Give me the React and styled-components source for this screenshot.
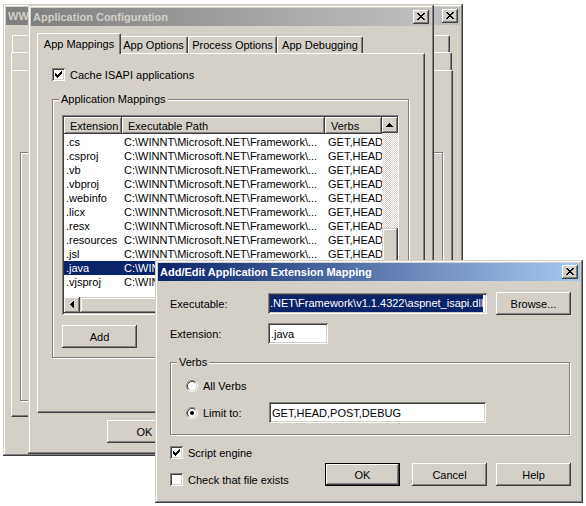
import React from "react";
import styled, { createGlobalStyle, css } from "styled-components";

const FACE = "#d4d0c8";
const SHADOW = "#808080";
const DARK = "#404040";
const NAVY = "#0a246a";

const GlobalStyle = createGlobalStyle`
  html, body { margin: 0; padding: 0; background: #fff; }
  body {
    font-family: "Liberation Sans", Arial, sans-serif;
    font-size: 11px;
    color: #000;
  }
  * { box-sizing: border-box; }
`;

const raised = css`
  box-shadow: inset -1px -1px ${DARK}, inset 1px 1px #fff, inset -2px -2px ${SHADOW}, inset 2px 2px ${FACE};
`;
const sunken = css`
  box-shadow: inset 1px 1px ${SHADOW}, inset -1px -1px #fff, inset 2px 2px ${DARK}, inset -2px -2px ${FACE};
`;
const dither = css`
  background: repeating-conic-gradient(#fff 0 25%, ${FACE} 0 50%) 0 0 / 2px 2px;
`;

const Desktop = styled.div`
  position: relative;
  width: 586px;
  height: 506px;
  overflow: hidden;
  background: #fff;
`;

/* windows sit on a free desktop, so they are placed by coordinates */
const Window = styled.section`
  position: absolute;
  isolation: isolate;
  left: ${(p) => p.$x}px;
  top: ${(p) => p.$y}px;
  width: ${(p) => p.$w}px;
  height: ${(p) => p.$h}px;
  padding: 3px;
  background: ${FACE};
  box-shadow: inset -1px -1px ${DARK}, inset 1px 1px ${FACE}, inset -2px -2px ${SHADOW}, inset 2px 2px #fff;
  display: flex;
  flex-direction: column;
`;

const TitleBar = styled.header`
  flex: none;
  height: 18px;
  margin-bottom: 1px;
  display: flex;
  align-items: center;
  gap: 4px;
  padding: 0 2px;
  background: linear-gradient(to right, ${(p) => (p.$active ? "#0a246a, #a6caf0" : "#808080, #c0c0c0")});
  color: ${(p) => (p.$active ? "#fff" : FACE)};
  font-weight: bold;
`;

const Title = styled.span`
  flex: 1;
  min-width: 0;
  white-space: nowrap;
  overflow: hidden;
`;

const CloseBox = styled.span`
  flex: none;
  width: 16px;
  height: 14px;
  background: ${FACE};
  ${raised}
`;

const Client = styled.div`
  flex: 1;
  display: flex;
  flex-direction: column;
  padding: ${(p) => p.$pad};
`;

const TabStrip = styled.div`
  flex: none;
  display: flex;
  align-items: flex-end;
  height: ${(p) => p.$h || 20}px;
  margin: ${(p) => p.$m || "0"};
  padding-left: ${(p) => p.$pl ?? 2}px;
`;

const Tab = styled.div`
  position: relative;
  z-index: ${(p) => (p.$active ? 2 : 1)};
  flex: ${(p) => (p.$w ? "none" : 1)};
  width: ${(p) => (p.$w ? `${p.$w}px` : "auto")};
  height: ${(p) => (p.$active ? 21 : p.$h || 17)}px;
  margin: ${(p) => (p.$active ? "0 -2px -1px -2px" : "0")};
  padding-bottom: ${(p) => (p.$active ? 1 : 0)}px;
  display: flex;
  align-items: center;
  justify-content: center;
  background: ${FACE};
  border-top: 1px solid #fff;
  border-left: 1px solid #fff;
  border-right: 1px solid ${DARK};
  border-radius: 2px 2px 0 0;
  box-shadow: inset -1px 0 ${SHADOW};
  white-space: nowrap;
  overflow: hidden;
`;

const TabPanel = styled.div`
  flex: none;
  height: ${(p) => p.$h}px;
  padding: ${(p) => p.$pad || "14px"};
  background: ${FACE};
  border: 1px solid;
  border-color: #fff ${DARK} ${DARK} #fff;
  box-shadow: inset -1px -1px ${SHADOW};
  display: flex;
  flex-direction: column;
`;

const Etched = styled.div`
  margin: ${(p) => p.$m};
  height: ${(p) => p.$h}px;
  border: 1px solid ${SHADOW};
  box-shadow: inset 1px 1px #fff, 1px 1px #fff;
`;

const GroupBox = styled.fieldset`
  margin: ${(p) => p.$mt || 0}px 1px 0 0;
  padding: 0;
  min-width: 0;
  border: 1px solid ${SHADOW};
  box-shadow: inset 1px 1px #fff, 1px 1px #fff;
`;

const Legend = styled.legend`
  margin-left: 6px;
  padding: 0 2px;
  line-height: 14px;
  background: ${FACE};
`;

const GroupInner = styled.div`
  padding: ${(p) => p.$pad};
  display: flex;
  flex-direction: column;
`;

const CheckRow = styled.div`
  display: flex;
  align-items: center;
  gap: 5px;
  height: 13px;
  white-space: nowrap;
`;

const CheckBox = styled.span`
  flex: none;
  width: 13px;
  height: 13px;
  background: #fff;
  ${sunken}
  svg { display: block; }
`;

const RadioRow = styled.div`
  display: flex;
  align-items: center;
  height: ${(p) => p.$h || 16}px;
  margin-top: ${(p) => p.$mt || 0}px;
  white-space: nowrap;
`;

const RadioGlyph = styled.svg`
  flex: none;
  display: block;
  margin-right: 5px;
`;

const RadioLabel = styled.span`
  width: ${(p) => (p.$w ? `${p.$w}px` : "auto")};
  flex: none;
`;

const Button = styled.button`
  flex: none;
  width: 75px;
  height: 23px;
  margin: 0 0 0 ${(p) => p.$ml || 0}px;
  padding: 0;
  border: ${(p) => (p.$default ? "1px solid #000" : "none")};
  background: ${FACE};
  font: 11px "Liberation Sans", Arial, sans-serif;
  color: ${(p) => (p.$disabled ? SHADOW : "#000")};
  text-shadow: ${(p) => (p.$disabled ? "1px 1px #fff" : "none")};
  ${raised}
`;

const ButtonRow = styled.div`
  flex: none;
  display: flex;
  justify-content: flex-end;
  gap: 6px;
  margin-top: 7px;
`;

const ListView = styled.div`
  flex: none;
  height: 200px;
  padding: 2px;
  background: #fff;
  ${sunken}
  display: grid;
  grid-template-columns: 318px 16px;
  grid-template-rows: 180px 16px;
`;

const ListMain = styled.div`
  overflow: hidden;
`;

const HeaderRow = styled.div`
  display: flex;
  height: 17px;
`;

const HeaderCell = styled.div`
  flex: none;
  width: ${(p) => p.$w}px;
  padding-left: 6px;
  display: flex;
  align-items: center;
  background: ${FACE};
  ${raised}
  white-space: nowrap;
  overflow: hidden;
`;

const Rows = styled.div`
  padding-top: 1px;
`;

const Row = styled.div`
  display: flex;
  align-items: center;
  height: 14px;
  background: ${(p) => (p.$selected ? NAVY : "transparent")};
  color: ${(p) => (p.$selected ? "#fff" : "#000")};
`;

const Cell = styled.div`
  flex: none;
  width: ${(p) => p.$w}px;
  padding-left: ${(p) => p.$pl}px;
  white-space: nowrap;
  overflow: hidden;
`;

const VScroll = styled.div`
  display: flex;
  flex-direction: column;
  ${dither}
`;

const HScroll = styled.div`
  display: flex;
  ${dither}
`;

const ScrollBtn = styled.div`
  flex: none;
  width: 16px;
  height: 16px;
  margin: ${(p) => (p.$end ? "auto 0 0 0" : "0")};
  background: ${FACE};
  ${raised}
  svg { display: block; }
`;

const HEnd = styled(ScrollBtn)`
  margin: 0 0 0 auto;
`;

const Thumb = styled.div`
  flex: none;
  width: ${(p) => (p.$w ? `${p.$w}px` : "16px")};
  height: ${(p) => (p.$h ? `${p.$h}px` : "16px")};
  margin: ${(p) => p.$m || 0};
  background: ${FACE};
  box-shadow: inset -1px -1px ${DARK}, inset 1px 1px ${FACE}, inset -2px -2px ${SHADOW}, inset 2px 2px #fff;
`;

const Corner = styled.div`
  background: ${FACE};
`;

const ActionLine = styled.div`
  display: flex;
  margin-top: 10px;
`;

const DialogBody = styled.div`
  display: flex;
  flex-direction: column;
  padding: 10px 9px 0 12px;
`;

const FieldRow = styled.div`
  display: flex;
  align-items: center;
  height: 23px;
  margin-top: ${(p) => p.$mt || 0}px;
`;

const FieldLabel = styled.span`
  flex: none;
  width: ${(p) => p.$w}px;
`;

const TextField = styled.div`
  flex: none;
  width: ${(p) => p.$w}px;
  height: 21px;
  padding: 2px ${(p) => p.$px ?? 3}px;
  background: #fff;
  ${sunken}
  display: flex;
  align-items: center;
  overflow: hidden;
  white-space: nowrap;
`;

const Highlight = styled.span`
  background: ${NAVY};
  color: #fff;
  line-height: 17px;
`;

const DialogFoot = styled.div`
  display: flex;
  align-items: flex-end;
  justify-content: space-between;
  margin-top: 11px;
`;

const CheckStack = styled.div`
  display: flex;
  flex-direction: column;
  gap: 14px;
`;

const ButtonGroup = styled.div`
  display: flex;
`;

/* small pixel glyphs, as rects: [x, y, w, h] */
const Pixels = ({ w, h, rects }) => (
  <svg width={w} height={h} viewBox={`0 0 ${w} ${h}`} shapeRendering="crispEdges">
    {rects.map(([x, y, rw, rh = 1], i) => (
      <rect key={i} x={x} y={y} width={rw} height={rh} fill="#000" />
    ))}
  </svg>
);

const CLOSE_X = [
  [4, 3, 2], [10, 3, 2], [5, 4, 2], [9, 4, 2], [6, 5, 4], [7, 6, 2],
  [6, 7, 4], [5, 8, 2], [9, 8, 2], [4, 9, 2], [10, 9, 2],
];
const CHECK = [
  [9, 3, 1], [8, 4, 2], [3, 5, 1], [7, 5, 3], [3, 6, 2], [6, 6, 3],
  [3, 7, 5], [4, 8, 3], [5, 9, 1],
];
const UP = [[7, 6, 1], [6, 7, 3], [5, 8, 5], [4, 9, 7]];
const DOWN = [[4, 6, 7], [5, 7, 5], [6, 8, 3], [7, 9, 1]];
const LEFT = [[6, 7, 1, 1], [7, 6, 1, 3], [8, 5, 1, 5], [9, 4, 1, 7]];
const RIGHT = [[6, 4, 1, 7], [7, 5, 1, 5], [8, 6, 1, 3], [9, 7, 1, 1]];

const Close = () => (
  <CloseBox>
    <Pixels w={16} h={14} rects={CLOSE_X} />
  </CloseBox>
);

const Check = ({ checked }) => (
  <CheckBox>{checked && <Pixels w={13} h={13} rects={CHECK} />}</CheckBox>
);

const Radio = ({ checked }) => (
  <RadioGlyph width="12" height="12" viewBox="0 0 12 12">
    <circle cx="6" cy="6" r="5" fill="#fff" />
    <path d="M2.11 9.89A5.5 5.5 0 0 1 9.89 2.11" fill="none" stroke={SHADOW} />
    <path d="M9.89 2.11A5.5 5.5 0 0 1 2.11 9.89" fill="none" stroke="#fff" />
    <path d="M2.82 9.18A4.5 4.5 0 0 1 9.18 2.82" fill="none" stroke={DARK} />
    <path d="M9.18 2.82A4.5 4.5 0 0 1 2.82 9.18" fill="none" stroke={FACE} />
    {checked && <circle cx="6" cy="6" r="2" fill="#000" />}
  </RadioGlyph>
);

const PATH = "C:\\WINNT\\Microsoft.NET\\Framework\\...";
const VERBS = "GET,HEAD,POST,DEBUG";
const EXTENSIONS = [
  ".cs", ".csproj", ".vb", ".vbproj", ".webinfo", ".licx",
  ".resx", ".resources", ".jsl", ".java", ".vjsproj",
];

function BackWindow() {
  return (
    <Window $x={3} $y={4} $w={460} $h={452}>
      <TitleBar>
        <Title>WWW Service Master Properties for KS</Title>
        <Close />
      </TitleBar>
      <Client $pad="9px 7px 0 5px">
        <TabStrip $h={17} $m="0 3px 0 1px" $pl={0}>
          <Tab>Web Site</Tab>
          <Tab>Performance</Tab>
          <Tab>ISAPI Filters</Tab>
          <Tab>Home Directory</Tab>
        </TabStrip>
        <TabStrip $h={18} $m="0 1px 0 0" $pl={0}>
          <Tab $h={18}>'Documents</Tab>
          <Tab $h={18}>Directory Security</Tab>
          <Tab $h={18}>HTTP Headers</Tab>
          <Tab $h={18}>Custom Errors</Tab>
        </TabStrip>
        <TabPanel $h={347} $pad="0 8px">
          <Etched $m="81px 1px 0 0" $h={249} />
        </TabPanel>
      </Client>
    </Window>
  );
}

function AppConfigWindow() {
  return (
    <Window $x={28} $y={5} $w={406} $h={449}>
      <TitleBar>
        <Title>Application Configuration</Title>
        <Close />
      </TitleBar>
      <Client $pad="6px 6px 0 6px">
        <TabStrip>
          <Tab $active $w={84}>App Mappings</Tab>
          <Tab $w={69}>App Options</Tab>
          <Tab $w={89}>Process Options</Tab>
          <Tab $w={86}>App Debugging</Tab>
        </TabStrip>
        <TabPanel $h={360}>
          <CheckRow>
            <Check checked />
            <span>Cache ISAPI applications</span>
          </CheckRow>
          <GroupBox $mt={11}>
            <Legend>Application Mappings</Legend>
            <GroupInner $pad="9px 9px 9px">
              <ListView>
                <ListMain>
                  <HeaderRow>
                    <HeaderCell $w={58}>Extension</HeaderCell>
                    <HeaderCell $w={203}>Executable Path</HeaderCell>
                    <HeaderCell $w={57}>Verbs</HeaderCell>
                  </HeaderRow>
                  <Rows>
                    {EXTENSIONS.map((ext) => (
                      <Row key={ext} $selected={ext === ".java"}>
                        <Cell $w={58} $pl={2}>{ext}</Cell>
                        <Cell $w={203} $pl={2}>{PATH}</Cell>
                        <Cell $w={57} $pl={3}>{VERBS}</Cell>
                      </Row>
                    ))}
                  </Rows>
                </ListMain>
                <VScroll>
                  <ScrollBtn>
                    <Pixels w={16} h={16} rects={UP} />
                  </ScrollBtn>
                  <Thumb $h={40} $m="95px 0 0 0" />
                  <ScrollBtn $end>
                    <Pixels w={16} h={16} rects={DOWN} />
                  </ScrollBtn>
                </VScroll>
                <HScroll>
                  <ScrollBtn>
                    <Pixels w={16} h={16} rects={LEFT} />
                  </ScrollBtn>
                  <Thumb $w={230} />
                  <HEnd>
                    <Pixels w={16} h={16} rects={RIGHT} />
                  </HEnd>
                </HScroll>
                <Corner />
              </ListView>
              <ActionLine>
                <Button>Add</Button>
              </ActionLine>
            </GroupInner>
          </GroupBox>
        </TabPanel>
        <ButtonRow>
          <Button>OK</Button>
          <Button>Cancel</Button>
          <Button $disabled>Apply</Button>
          <Button>Help</Button>
        </ButtonRow>
      </Client>
    </Window>
  );
}

function MappingDialog() {
  return (
    <Window $x={155} $y={260} $w={428} $h={243}>
      <TitleBar $active>
        <Title>Add/Edit Application Extension Mapping</Title>
        <Close />
      </TitleBar>
      <DialogBody>
        <FieldRow>
          <FieldLabel $w={98}>Executable:</FieldLabel>
          <TextField $w={219} $px={2}>
            <Highlight>.NET\Framework\v1.1.4322\aspnet_isapi.dll</Highlight>
          </TextField>
          <Button $ml={9}>Browse...</Button>
        </FieldRow>
        <FieldRow $mt={7}>
          <FieldLabel $w={98}>Extension:</FieldLabel>
          <TextField $w={60}>.java</TextField>
        </FieldRow>
        <GroupBox $mt={10}>
          <Legend>Verbs</Legend>
          <GroupInner $pad="9px 15px 11px">
            <RadioRow>
              <Radio />
              <RadioLabel>All Verbs</RadioLabel>
            </RadioRow>
            <RadioRow $h={21} $mt={8}>
              <Radio checked />
              <RadioLabel $w={66}>Limit to:</RadioLabel>
              <TextField $w={217}>{VERBS}</TextField>
            </RadioRow>
          </GroupInner>
        </GroupBox>
        <DialogFoot>
          <CheckStack>
            <CheckRow>
              <Check checked />
              <span>Script engine</span>
            </CheckRow>
            <CheckRow>
              <Check />
              <span>Check that file exists</span>
            </CheckRow>
          </CheckStack>
          <ButtonGroup>
            <Button $default>OK</Button>
            <Button $ml={12}>Cancel</Button>
            <Button $ml={9}>Help</Button>
          </ButtonGroup>
        </DialogFoot>
      </DialogBody>
    </Window>
  );
}

export default function App() {
  return (
    <>
      <GlobalStyle />
      <Desktop>
        <BackWindow />
        <AppConfigWindow />
        <MappingDialog />
      </Desktop>
    </>
  );
}
